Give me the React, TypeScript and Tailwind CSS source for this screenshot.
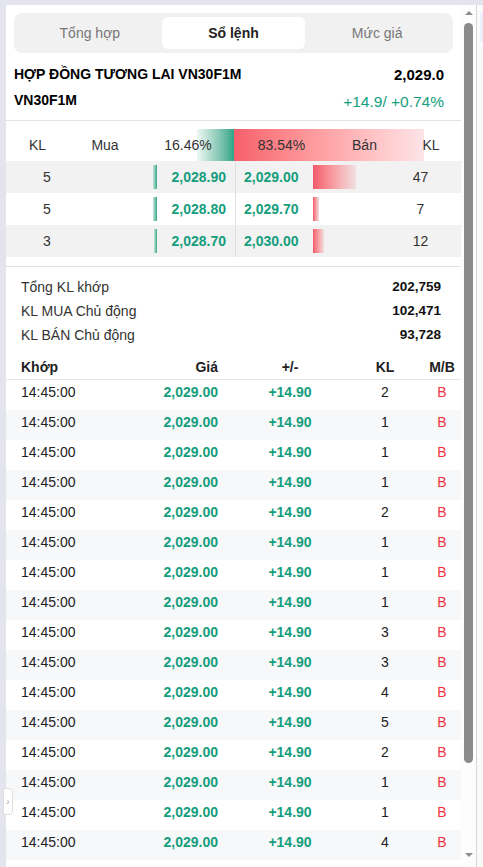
import React from 'react';

const tabs = ['Tổng hợp', 'Sổ lệnh', 'Mức giá'];

const book = [
  { buyKl: 5, buy: '2,028.90', sell: '2,029.00', sellKl: 47 },
  { buyKl: 5, buy: '2,028.80', sell: '2,029.70', sellKl: 7 },
  { buyKl: 3, buy: '2,028.70', sell: '2,030.00', sellKl: 12 },
];

const stats = [
  { label: 'Tổng KL khớp', value: '202,759' },
  { label: 'KL MUA Chủ động', value: '102,471' },
  { label: 'KL BÁN Chủ động', value: '93,728' },
];

const trades = [2, 1, 1, 1, 2, 1, 1, 1, 3, 3, 4, 5, 2, 1, 1, 4, 2, 1, 1, 3];

const App = () => {
  return (
    <div className="relative flex h-[867px] w-[483px] overflow-hidden bg-[#e3e4ee] pl-[6px] pt-[5px] font-['Liberation_Sans',Arial,sans-serif] text-[#222]">
      <div className="flex h-[862px] w-[471px] shrink-0 overflow-hidden border-r border-[#d3d4dc] bg-white">
        <div className="w-[455px] shrink-0">
          {/* tabs */}
          <div className="mx-[8px] mt-[8px] grid grid-cols-3 rounded-lg bg-[#f1f1f1] p-[4px]">
            {tabs.map((t, i) => (
              <div
                key={t}
                className={
                  i === 1
                    ? 'flex h-[32px] items-center justify-center rounded-md bg-white text-[14px] font-bold text-[#222]'
                    : 'flex h-[32px] items-center justify-center text-[14px] text-[#777]'
                }
              >
                {t}
              </div>
            ))}
          </div>

          {/* contract */}
          <div className="flex flex-col gap-[4px] border-b border-[#e2e2e2] pb-[9px] pl-[8px] pr-[17px] pt-[10px]">
            <div className="flex h-[22px] items-center justify-between">
              <span className="text-[14px] font-bold text-black">HỢP ĐỒNG TƯƠNG LAI VN30F1M</span>
              <span className="mt-[3px] text-[15px] font-bold text-black">2,029.0</span>
            </div>
            <div className="flex h-[22px] items-center justify-between">
              <span className="text-[14px] font-bold text-black">VN30F1M</span>
              <span className="mt-[3px] text-[15.5px] text-[#159e7d]">+14.9/ +0.74%</span>
            </div>
          </div>

          {/* order book */}
          <div className="border-b border-[#e2e2e2] pb-[9px] pt-[8px]">
            <div className="relative h-[32px]">
              <div className="absolute left-[191px] top-0 flex h-[32px] w-[227px]">
                <div className="h-full w-[16.46%] bg-linear-to-r from-[#eef8f5] to-[#28a689]" />
                <div className="h-full flex-1 bg-linear-to-r from-[#f6606b] to-[#fde4e7]" />
              </div>
              <div className="relative grid h-full grid-cols-[63px_72px_94px_93px_73px_1fr] items-center text-center text-[14px] text-[#333]">
                <span>KL</span>
                <span>Mua</span>
                <span>16.46%</span>
                <span>83.54%</span>
                <span>Bán</span>
                <span>KL</span>
              </div>
            </div>
            {book.map((r, i) => (
              <div key={i} className={`flex h-[32px] text-[14px] ${i % 2 === 0 ? 'bg-[#f2f2f2]' : 'bg-white'}`}>
                <div className="flex w-[229px] items-center">
                  <span className="w-[82px] text-center text-[#333]">{r.buyKl}</span>
                  <div className="flex h-[24px] w-[69px] justify-end">
                    <div
                      className="h-full bg-linear-to-r from-[#c2e6dc] to-[#2aa88a]"
                      style={{ width: Math.max(2, r.buyKl * 0.85) }}
                    />
                  </div>
                  <span className="flex-1 pr-[9px] text-right font-bold text-[#159e7d]">{r.buy}</span>
                </div>
                <div className="flex flex-1 items-center border-l border-[#e0e0e0]">
                  <span className="w-[77px] pl-[8px] font-bold text-[#159e7d]">{r.sell}</span>
                  <div className="flex h-[24px] w-[70px]">
                    <div
                      className="h-full bg-linear-to-r from-[#f4586a] to-[#efdfe1]"
                      style={{ width: Math.max(2, r.sellKl * 0.92) }}
                    />
                  </div>
                  <span className="flex-1 pr-[3px] text-center text-[#333]">{r.sellKl}</span>
                </div>
              </div>
            ))}
          </div>

          {/* totals */}
          <div className="pl-[15px] pr-[20px] pt-[8px]">
            {stats.map((s) => (
              <div key={s.label} className="flex h-[24px] items-center justify-between">
                <span className="text-[14px] text-[#333]">{s.label}</span>
                <span className="text-[13.5px] font-bold text-[#111]">{s.value}</span>
              </div>
            ))}
          </div>

          {/* trades */}
          <div className="mt-[5px] grid h-[28px] grid-cols-[115px_82px_144px_46px_1fr] items-center border-b border-[#e6e6e6] pl-[15px] pt-[3px] text-[14px] font-bold text-[#222]">
            <span>Khớp</span>
            <span className="text-right">Giá</span>
            <span className="text-center">+/-</span>
            <span className="text-center">KL</span>
            <span className="pl-[15px] text-center">M/B</span>
          </div>
          {trades.map((kl, i) => (
            <div
              key={i}
              className={`grid h-[30px] grid-cols-[115px_82px_144px_46px_1fr] items-center pb-[6px] pl-[15px] text-[14px] ${i % 2 === 1 ? 'bg-[#f7f8fa]' : 'bg-white'}`}
            >
              <span className="text-[#222]">14:45:00</span>
              <span className="text-right font-bold text-[#159e7d]">2,029.00</span>
              <span className="text-center font-bold text-[#159e7d]">+14.90</span>
              <span className="text-center text-[#222]">{kl}</span>
              <span className="pl-[15px] text-center text-[#f0323f]">B</span>
            </div>
          ))}
        </div>

        {/* scrollbar */}
        <div className="flex w-[15px] shrink-0 flex-col items-center bg-[#fdfdfd]">
          <div className="mt-[6px] h-0 w-0 border-x-[4px] border-b-[4px] border-x-transparent border-b-[#8e8e8e]" />
          <div className="mt-[8px] h-[740px] w-[9px] rounded-full bg-[#8b8b8b]" />
          <div className="mb-[10px] mt-auto h-0 w-0 border-x-[4px] border-t-[4px] border-x-transparent border-t-[#8e8e8e]" />
        </div>
      </div>

      {/* right neighbour */}
      <div className="flex-1 bg-[#fafafa] pl-[3px] pt-[7px]">
        <div className="h-[31px] w-full rounded-l-md bg-[#eaf1fb]" />
      </div>

      {/* collapse handle */}
      <div className="absolute left-[3px] top-[788px] flex h-[27px] w-[10px] items-center justify-center rounded-r-[4px] border border-[#dedede] bg-white text-[10px] text-[#aaa]">
        ›
      </div>
    </div>
  );
};

export default App;
